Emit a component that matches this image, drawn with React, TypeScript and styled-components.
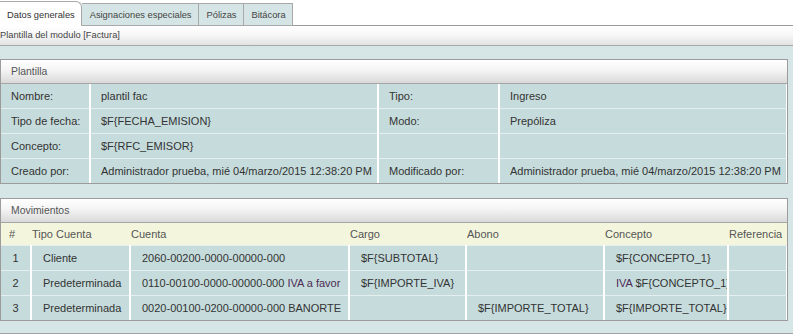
import { FC } from "react";
import styled, { createGlobalStyle, css } from "styled-components";

const GlobalStyle = createGlobalStyle`
  html, body {
    margin: 0;
    padding: 0;
    background: #ffffff;
  }
  body {
    font-family: "Liberation Sans", Arial, sans-serif;
    font-size: 11px;
    color: #333333;
  }
`;

const Page = styled.div`
  width: 793px;
  height: 336px;
  padding-bottom: 2px;
  box-sizing: border-box;
  overflow: hidden;
  display: flex;
  flex-direction: column;
`;

const TabBar = styled.div`
  display: flex;
  align-items: flex-end;
  height: 26px;
  padding-top: 1px;
  box-sizing: border-box;
  border-bottom: 1px solid #9a9a9a;
`;

const Tab = styled.div<{ $active?: boolean }>`
  height: 21px;
  line-height: 22px;
  padding: 0 6px 0 8px;
  margin-bottom: -1px;
  border: 1px solid #a8a8a8;
  border-left: none;
  background: #d5e5e5;
  color: #444444;
  font-size: 9.3px;
  white-space: nowrap;

  ${({ $active }) =>
    $active &&
    css`
      height: 24px;
      line-height: 27px;
      padding: 0 6px 0 7px;
      background: #ffffff;
      color: #333333;
      border-bottom: none;
      border-top-right-radius: 6px;
    `}
`;

const SubTitle = styled.div`
  height: 19px;
  line-height: 19px;
  color: #444444;
  font-size: 9.3px;
  background: linear-gradient(#ffffff 0%, #f6f6f6 50%, #e2e2e2 100%);
  border-bottom: 1px solid #a9a9a9;
`;

const Content = styled.div`
  flex: 1;
  background: #d6e5e5;
  padding: 13px 5px 0 0;
  display: flex;
  flex-direction: column;
  gap: 14px;
  border-bottom: 1px solid #a0a0a0;
`;

const Panel = styled.div`
  border: 1px solid #9c9c9c;
  background: #d6e5e5;
`;

const PanelHeader = styled.div`
  height: 23px;
  line-height: 23px;
  padding-left: 10px;
  color: #555555;
  font-size: 10.4px;
  background: linear-gradient(#ffffff 0%, #f4f4f4 45%, #d9d9d9 100%);
  border-bottom: 1px solid #a5a5a5;
`;

const Table = styled.table`
  width: 100%;
  table-layout: fixed;
  border-collapse: collapse;
`;

const Row = styled.tr`
  &:last-child td {
    border-bottom: none;
  }
`;

const Cell = styled.td<{ $center?: boolean }>`
  height: 24px;
  padding: 0 0 0 10px;
  background: #c6dcdc;
  border-right: 2px solid #ffffff;
  border-bottom: 1px solid #e6efef;
  white-space: nowrap;
  overflow: hidden;
  color: #333333;

  ${({ $center }) =>
    $center &&
    css`
      padding: 0;
      text-align: center;
    `}

  &:last-child {
    border-right: 1px solid #ffffff;
  }
`;

const DataCell = styled(Cell)`
  padding-left: 11px;
  ${({ $center }) =>
    $center &&
    css`
      padding: 0;
    `}
`;

const HeadCell = styled.th<{ $first?: boolean }>`
  height: 22px;
  padding: 0 0 0 ${({ $first }) => ($first ? "8px" : "1px")};
  text-align: left;
  font-weight: normal;
  color: #555555;
  background: #f3f5dc;
  border-bottom: 1px solid #e6efef;
  white-space: nowrap;
  overflow: hidden;
`;

const Accent = styled.span`
  color: #4d2a55;
`;

type InfoRow = [string, string, string, string];

const plantillaRows: InfoRow[] = [
  ["Nombre:", "plantil fac", "Tipo:", "Ingreso"],
  ["Tipo de fecha:", "$F{FECHA_EMISION}", "Modo:", "Prepóliza"],
  ["Concepto:", "$F{RFC_EMISOR}", "", ""],
  [
    "Creado por:",
    "Administrador prueba, mié 04/marzo/2015 12:38:20 PM",
    "Modificado por:",
    "Administrador prueba, mié 04/marzo/2015 12:38:20 PM",
  ],
];

const PlantillaPanel: FC = () => (
  <Panel>
    <PanelHeader>Plantilla</PanelHeader>
    <Table>
      <colgroup>
        <col style={{ width: 89 }} />
        <col style={{ width: 288 }} />
        <col style={{ width: 121 }} />
        <col />
      </colgroup>
      <tbody>
        {plantillaRows.map((row) => (
          <Row key={row[0]}>
            {row.map((value, i) => (
              <Cell key={i}>{value}</Cell>
            ))}
          </Row>
        ))}
      </tbody>
    </Table>
  </Panel>
);

type Movimiento = {
  id: number;
  tipo: string;
  cuenta: string;
  cuentaExtra?: string;
  cargo: string;
  abono: string;
  conceptoPrefix?: string;
  concepto: string;
  referencia: string;
};

const movimientos: Movimiento[] = [
  {
    id: 1,
    tipo: "Cliente",
    cuenta: "2060-00200-0000-00000-000",
    cargo: "$F{SUBTOTAL}",
    abono: "",
    concepto: "$F{CONCEPTO_1}",
    referencia: "",
  },
  {
    id: 2,
    tipo: "Predeterminada",
    cuenta: "0110-00100-0000-00000-000 ",
    cuentaExtra: "IVA a favor",
    cargo: "$F{IMPORTE_IVA}",
    abono: "",
    conceptoPrefix: "IVA ",
    concepto: "$F{CONCEPTO_1}",
    referencia: "",
  },
  {
    id: 3,
    tipo: "Predeterminada",
    cuenta: "0020-00100-0200-00000-000 BANORTE",
    cargo: "",
    abono: "$F{IMPORTE_TOTAL}",
    concepto: "$F{IMPORTE_TOTAL}",
    referencia: "",
  },
];

const columns = ["#", "Tipo Cuenta", "Cuenta", "Cargo", "Abono", "Concepto", "Referencia"];
const columnWidths = [30, 99, 219, 117, 138, 124];

const MovimientosPanel: FC = () => (
  <Panel>
    <PanelHeader>Movimientos</PanelHeader>
    <Table>
      <colgroup>
        {columnWidths.map((w, i) => (
          <col key={i} style={{ width: w }} />
        ))}
        <col />
      </colgroup>
      <thead>
        <tr>
          {columns.map((c, i) => (
            <HeadCell key={c} $first={i === 0}>
              {c}
            </HeadCell>
          ))}
        </tr>
      </thead>
      <tbody>
        {movimientos.map((m) => (
          <Row key={m.id}>
            <DataCell $center>{m.id}</DataCell>
            <DataCell>{m.tipo}</DataCell>
            <DataCell>
              {m.cuenta}
              {m.cuentaExtra && <Accent>{m.cuentaExtra}</Accent>}
            </DataCell>
            <DataCell>{m.cargo}</DataCell>
            <DataCell>{m.abono}</DataCell>
            <DataCell>
              {m.conceptoPrefix && <Accent>{m.conceptoPrefix}</Accent>}
              {m.concepto}
            </DataCell>
            <DataCell>{m.referencia}</DataCell>
          </Row>
        ))}
      </tbody>
    </Table>
  </Panel>
);

const tabs = ["Datos generales", "Asignaciones especiales", "Pólizas", "Bitácora"];

const App: FC = () => (
  <Page>
    <GlobalStyle />
    <TabBar>
      {tabs.map((t, i) => (
        <Tab key={t} $active={i === 0}>
          {t}
        </Tab>
      ))}
    </TabBar>
    <SubTitle>Plantilla del modulo [Factura]</SubTitle>
    <Content>
      <PlantillaPanel />
      <MovimientosPanel />
    </Content>
  </Page>
);

export default App;
